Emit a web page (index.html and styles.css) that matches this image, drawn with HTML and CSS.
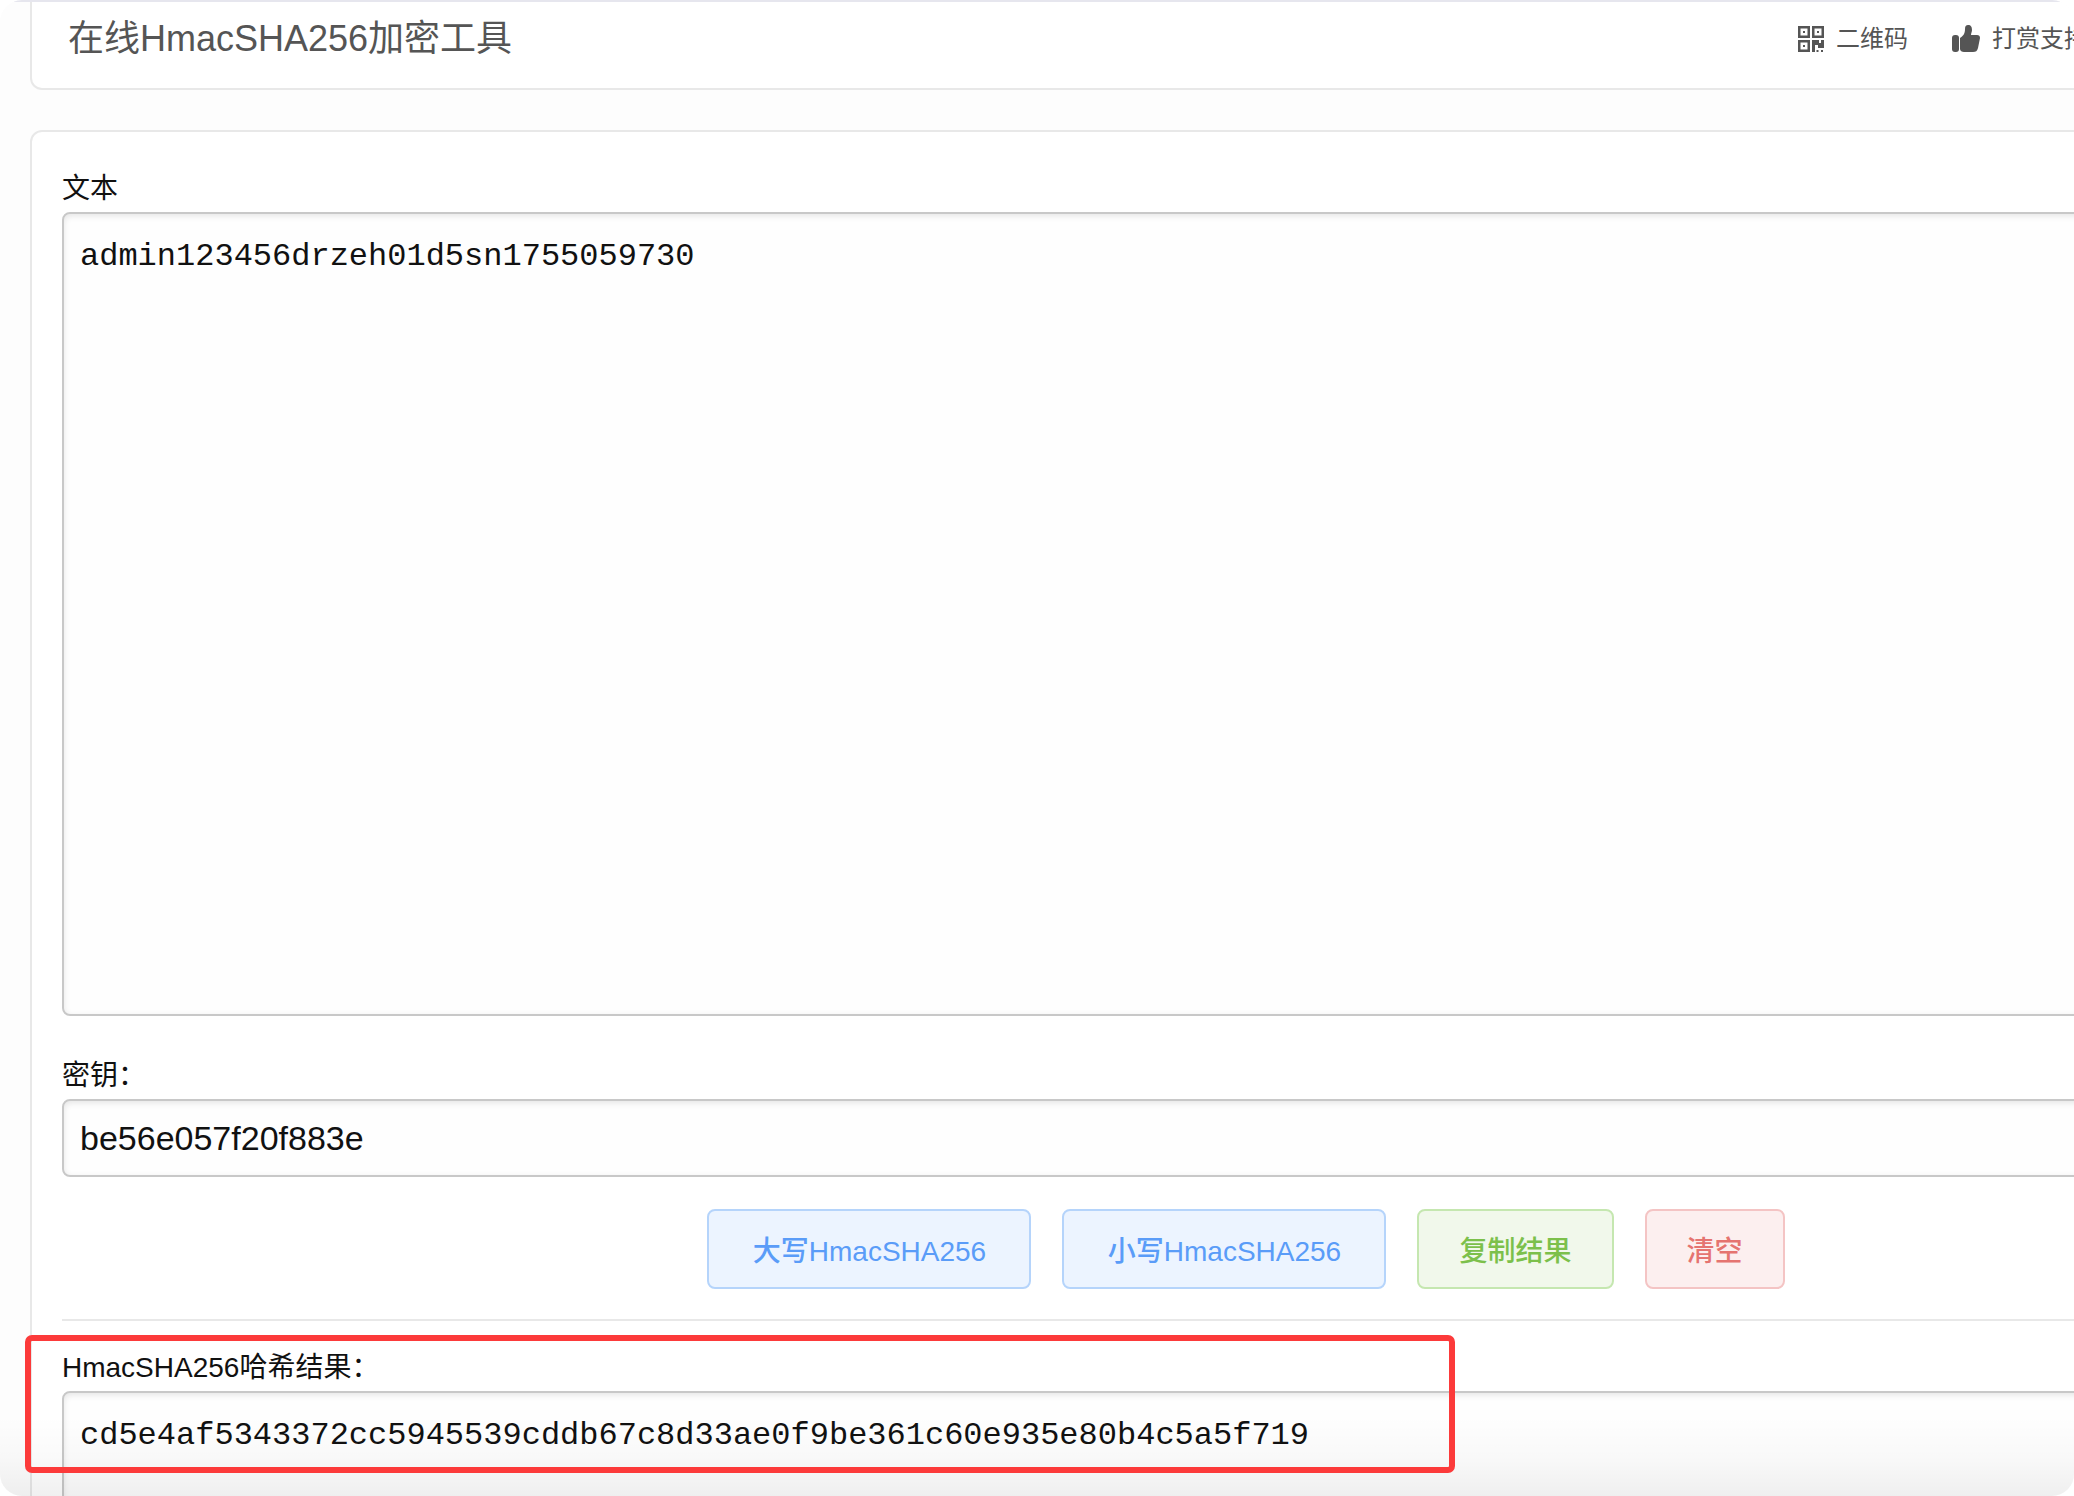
FILE: index.html
```html
<!DOCTYPE html>
<html lang="zh-CN">
<head>
    <meta charset="UTF-8">
    <meta name="viewport" content="width=device-width, initial-scale=1.0">
    <title>在线HmacSHA256加密工具</title>
    <link rel="stylesheet" href="styles.css">
</head>
<body>
    <div class="page">
        <header class="card header">
            <h1>在线HmacSHA256加密工具</h1>
            <nav class="tools">
                <a href="#qrcode">
                    <svg class="icon-qr" viewBox="0 0 26 26" fill="currentColor" fill-rule="evenodd">
                        <path d="M0 0h12v12H0zM2.500 2.500v7h7v-7zM14 0h12v12H14zM16.500 2.500v7h7v-7zM0 14h12v12H0zM2.500 16.500v7h7v-7z"/>
                        <path d="M5 5h2v2H5zM19 5h2v2h-2zM5 19h2v2H5z"/>
                        <path d="M14 14h7v3h2v-3h3v8h-6v-3h-3v7h-3zM18.500 24h2v2h-2zM23 24h2v2h-2z"/>
                    </svg>
                    二维码
                </a>
                <a href="#donate">
                    <svg class="icon-like" viewBox="0 0 28 28" fill="currentColor">
                        <rect x="0" y="10" width="7" height="17" rx="3"/>
                        <path d="M8 13c3-2 5-4 5-9 0-3 1-4 3-4 3 0 4 2 4 5 0 2-1 3-1 5h6c2 0 3 1 3 3l-2 10c-1 3-2 4-5 4H12c-2 0-4-1-4-3z"/>
                    </svg>
                    打赏支持
                </a>
            </nav>
        </header>

        <main class="card">
            <label for="source">文本</label>
            <textarea id="source" spellcheck="false">admin123456drzeh01d5sn1755059730</textarea>

            <label for="key">密钥：</label>
            <input type="text" id="key" value="be56e057f20f883e" spellcheck="false">

            <div class="buttons">
                <button type="button" class="btn primary">大写HmacSHA256</button>
                <button type="button" class="btn primary">小写HmacSHA256</button>
                <button type="button" class="btn success">复制结果</button>
                <button type="button" class="btn danger">清空</button>
            </div>

            <section class="result">
                <label for="result">HmacSHA256哈希结果：</label>
                <textarea id="result" spellcheck="false">cd5e4af5343372cc5945539cddb67c8d33ae0f9be361c60e935e80b4c5a5f719</textarea>
                <div class="highlight"></div>
            </section>
        </main>
    </div>
</body>
</html>
```
FILE: styles.css
```css
* {
    box-sizing: border-box;
}

body {
    margin: 0;
    background: #fff;
    color: #111;
    font-family: "Liberation Sans", "Noto Sans CJK SC", sans-serif;
    font-size: 28px;
    line-height: 40px;
}

.page {
    position: relative;
    height: 100vh;
    padding-left: 30px;
    overflow: hidden;
    background: #fdfdfd;
    border-radius: 22px;
}

/* thin line along the top edge of the window */
.page::before {
    content: '';
    position: absolute;
    top: 0;
    left: 14px;
    right: 14px;
    height: 2px;
    background: #e6e6ee;
}

/* shade at the bottom edge */
.page::after {
    content: '';
    position: absolute;
    left: 0;
    right: 0;
    bottom: 0;
    height: 80px;
    background: linear-gradient(to bottom, rgba(0, 0, 0, 0), rgba(0, 0, 0, 0.02) 50%, rgba(0, 0, 0, 0.06));
    pointer-events: none;
}

/* the cards run past the right side of the window */
.card {
    width: calc(100% + 388px);
    padding: 37px 30px;
    background: #fff;
    border: 2px solid #e8e8e8;
    border-radius: 12px;
}

.header {
    display: flex;
    justify-content: space-between;
    align-items: center;
    height: 90px;
    margin-bottom: 40px;
    padding: 0 372px 11px 36px;
    border-top: 0;
    border-radius: 0 0 12px 12px;
    color: #555;
}

h1 {
    margin: 0;
    font-size: 36px;
    font-weight: normal;
}

.tools {
    display: flex;
    gap: 44px;
    font-size: 24px;
}

.tools a {
    display: flex;
    align-items: center;
    gap: 12px;
    color: inherit;
    text-decoration: none;
}

.icon-qr {
    width: 26px;
    height: 26px;
}

.icon-like {
    width: 28px;
    height: 28px;
}

label {
    display: block;
    margin-bottom: 3px;
}

textarea,
input {
    display: block;
    width: 100%;
    margin: 0;
    padding: 16px;
    background: #fefefe;
    border: 2px solid #c8c8c8;
    border-radius: 8px;
    box-shadow: inset 0 2px 6px rgba(0, 0, 0, 0.1);
    color: #111;
    outline: none;
}

textarea {
    height: 804px;
    margin-bottom: 40px;
    padding-top: 24px;
    font: 32px/38px "Liberation Mono", monospace;
    resize: none;
}

input {
    height: 78px;
    font: 34px "Liberation Sans", sans-serif;
}

.buttons {
    display: flex;
    justify-content: center;
    gap: 31px;
    padding: 32px 0 30px;
    border-bottom: 2px solid #e8e8e8;
}

.btn {
    height: 80px;
    padding: 0 40px;
    border: 2px solid;
    border-radius: 8px;
    font-family: inherit;
    font-size: 28px;
    font-weight: 500;
}

.primary {
    min-width: 324px;
    background: #ecf4ff;
    border-color: #b5d4fb;
    color: #5a9cf8;
}

.success {
    background: #f1f8eb;
    border-color: #c5e7b0;
    color: #7cc04b;
}

.danger {
    background: #fcefef;
    border-color: #f4c4c4;
    color: #e57470;
}

.result {
    position: relative;
    padding-top: 27px;
}

.highlight {
    position: absolute;
    top: 14px;
    left: -37px;
    width: 1430px;
    height: 138px;
    border: 6px solid #fc3a3a;
    border-radius: 7px;
    z-index: 1;
    pointer-events: none;
}
```
